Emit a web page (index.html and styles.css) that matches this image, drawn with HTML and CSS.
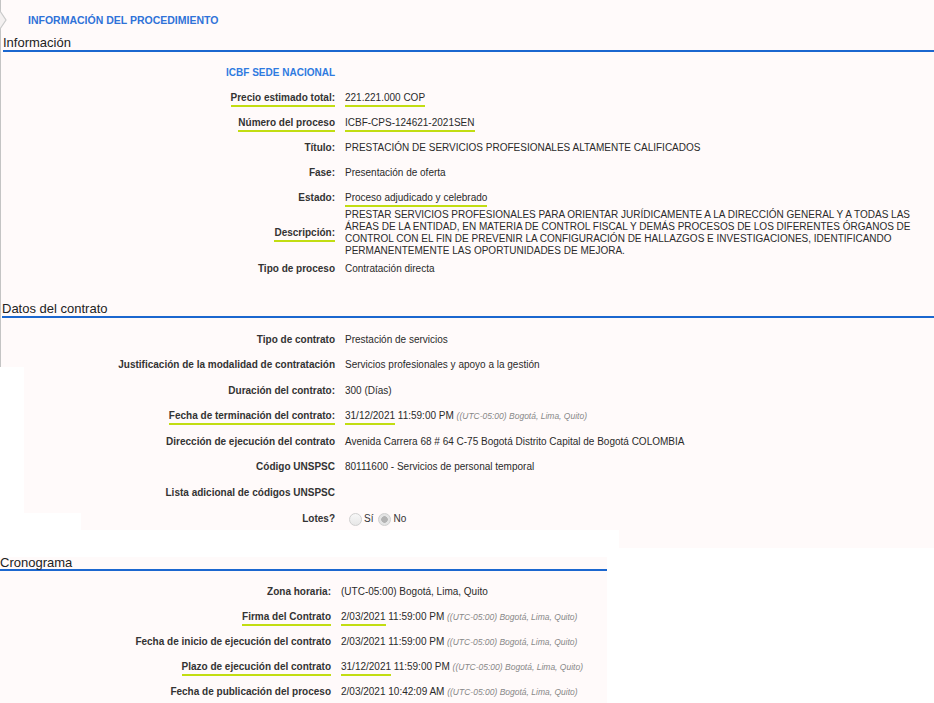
FILE: index.html
```html
<!DOCTYPE html>
<html lang="es">
<head>
<meta charset="utf-8">
<title>Información del procedimiento</title>
<link rel="stylesheet" href="styles.css">
</head>
<body>
<div class="sheet">
  <header class="proc-header">
    <svg class="chevron" width="9" height="22" viewBox="0 0 9 22" aria-hidden="true">
      <path d="M1 0 L1 2 L7 11 L1 20 L1 22" fill="#f4f0f0" stroke="#c9c9c9" stroke-width="1.2"/>
    </svg>
    <h1 class="proc-title">INFORMACIÓN DEL PROCEDIMIENTO</h1>
  </header>

  <h2 class="section-title">Información</h2>
  <div class="rows">
    <div class="label entity">ICBF SEDE NACIONAL</div><div class="value"></div>
    <div class="label"><span class="hl">Precio estimado total:</span></div><div class="value"><span class="hl">221.221.000 COP</span></div>
    <div class="label"><span class="hl">Número del proceso</span></div><div class="value"><span class="hl">ICBF-CPS-124621-2021SEN</span></div>
    <div class="label">Título:</div><div class="value">PRESTACIÓN DE SERVICIOS PROFESIONALES ALTAMENTE CALIFICADOS</div>
    <div class="label">Fase:</div><div class="value">Presentación de oferta</div>
    <div class="label">Estado:</div><div class="value"><span class="hl">Proceso adjudicado y celebrado</span></div>
    <div class="label"><span class="hl">Descripción:</span></div><div class="value desc">PRESTAR SERVICIOS PROFESIONALES PARA ORIENTAR JURÍDICAMENTE A LA DIRECCIÓN GENERAL Y A TODAS LAS<br>ÁREAS DE LA ENTIDAD, EN MATERIA DE CONTROL FISCAL Y DEMÁS PROCESOS DE LOS DIFERENTES ÓRGANOS DE<br>CONTROL CON EL FIN DE PREVENIR LA CONFIGURACIÓN DE HALLAZGOS E INVESTIGACIONES, IDENTIFICANDO<br>PERMANENTEMENTE LAS OPORTUNIDADES DE MEJORA.</div>
    <div class="label">Tipo de proceso</div><div class="value">Contratación directa</div>
  </div>

  <h2 class="section-title section-gap">Datos del contrato</h2>
  <div class="rows rows-contract">
    <div class="label">Tipo de contrato</div><div class="value">Prestación de servicios</div>
    <div class="label">Justificación de la modalidad de contratación</div><div class="value">Servicios profesionales y apoyo a la gestión</div>
    <div class="label">Duración del contrato:</div><div class="value">300 (Días)</div>
    <div class="label"><span class="hl">Fecha de terminación del contrato:</span></div><div class="value"><span class="hl">31/12/2021</span> 11:59:00 PM <span class="tz">((UTC-05:00) Bogotá, Lima, Quito)</span></div>
    <div class="label">Dirección de ejecución del contrato</div><div class="value">Avenida Carrera 68 # 64 C-75 Bogotá Distrito Capital de Bogotá COLOMBIA</div>
    <div class="label">Código UNSPSC</div><div class="value">80111600 - Servicios de personal temporal</div>
    <div class="label">Lista adicional de códigos UNSPSC</div><div class="value"></div>
    <div class="label lotes">Lotes?</div><div class="value radios lotes"><span class="radio"></span><span class="radio-text">Sí</span><span class="radio checked"></span><span class="radio-text">No</span></div>
  </div>
</div>

<section class="schedule">
  <h2 class="section-title schedule-title">Cronograma</h2>
  <div class="rows rows-schedule">
    <div class="label">Zona horaria:</div><div class="value">(UTC-05:00) Bogotá, Lima, Quito</div>
    <div class="label"><span class="hl">Firma del Contrato</span></div><div class="value"><span class="hl">2/03/2021</span> 11:59:00 PM <span class="tz">((UTC-05:00) Bogotá, Lima, Quito)</span></div>
    <div class="label">Fecha de inicio de ejecución del contrato</div><div class="value">2/03/2021 11:59:00 PM <span class="tz">((UTC-05:00) Bogotá, Lima, Quito)</span></div>
    <div class="label"><span class="hl">Plazo de ejecución del contrato</span></div><div class="value"><span class="hl">31/12/2021</span> 11:59:00 PM <span class="tz">((UTC-05:00) Bogotá, Lima, Quito)</span></div>
    <div class="label">Fecha de publicación del proceso</div><div class="value">2/03/2021 10:42:09 AM <span class="tz">((UTC-05:00) Bogotá, Lima, Quito)</span></div>
  </div>
</section>
</body>
</html>
```

FILE: styles.css
```css
html, body {
  margin: 0;
  padding: 0;
  background: #ffffff;
  font-family: "Liberation Sans", Arial, sans-serif;
  color: #333333;
}

.sheet {
  height: 548px;
  box-sizing: border-box;
  background:
    linear-gradient(#c4c4c4, #c4c4c4) 0 0 / 1px 367px no-repeat,
    linear-gradient(#ffffff, #ffffff) 0 367px / 24px 146px no-repeat,
    linear-gradient(#ffffff, #ffffff) 0 513px / 81px 17px no-repeat,
    linear-gradient(#ffffff, #ffffff) 0 530px / 619px 18px no-repeat,
    #fffafa;
}

.proc-header {
  height: 35px;
  display: flex;
  align-items: center;
  padding-top: 5px;
  box-sizing: border-box;
}

.chevron {
  display: block;
  margin-left: -1px;
}

.proc-title {
  margin: 0 0 0 20px;
  font-size: 10.5px;
  font-weight: bold;
  color: #2f72d8;
  line-height: 14px;
}

.section-title {
  margin: 0 0 0 3px;
  font-size: 13px;
  font-weight: normal;
  line-height: 15px;
  color: #222222;
  border-bottom: 2px solid #1b67cf;
}

.section-gap {
  margin-top: 20px;
  margin-left: 2px;
}

.rows {
  display: grid;
  grid-template-columns: 335px 1fr;
  column-gap: 10px;
  grid-auto-rows: minmax(25px, auto);
  padding-top: 8px;
  font-size: 10px;
  line-height: 12px;
}

.rows-contract {
  padding-top: 9px;
  grid-auto-rows: minmax(25.5px, auto);
}

.label {
  display: flex;
  align-items: center;
  justify-content: flex-end;
  text-align: right;
  font-weight: bold;
  color: #333333;
  white-space: nowrap;
}

.value {
  display: flex;
  align-items: center;
  flex-wrap: wrap;
  white-space: pre;
  color: #2a2a2a;
}

.value.desc {
  display: block;
  white-space: normal;
  align-self: center;
  margin: -1px 0;
}

.lotes {
  padding-top: 2px;
}

.entity {
  color: #2f7ae0;
}

.hl {
  border-bottom: 2px solid #c2dd12;
  padding-bottom: 1px;
  margin-bottom: -3px;
}

.tz {
  font-size: 8.5px;
  font-style: italic;
  color: #888888;
}

.radios {
  white-space: nowrap;
}

.radio {
  display: inline-block;
  width: 11px;
  height: 11px;
  border: 1px solid #cfcfcf;
  border-radius: 50%;
  background: linear-gradient(#f7f7f7, #e7e7e7);
}

.radio:first-child {
  margin-left: 4px;
}

.radio.checked {
  background: radial-gradient(circle, #b3b3b3 0 3px, #e4e4e4 3.6px);
}

.radio-text {
  margin: 0 5px 0 2px;
  color: #333333;
}

.schedule {
  width: 607px;
  margin-top: 9px;
  background: #fffafa;
}

.schedule-title {
  margin-left: 0;
  line-height: 12px;
}

.rows-schedule {
  grid-template-columns: 331px 1fr;
  padding-top: 8px;
}
```
